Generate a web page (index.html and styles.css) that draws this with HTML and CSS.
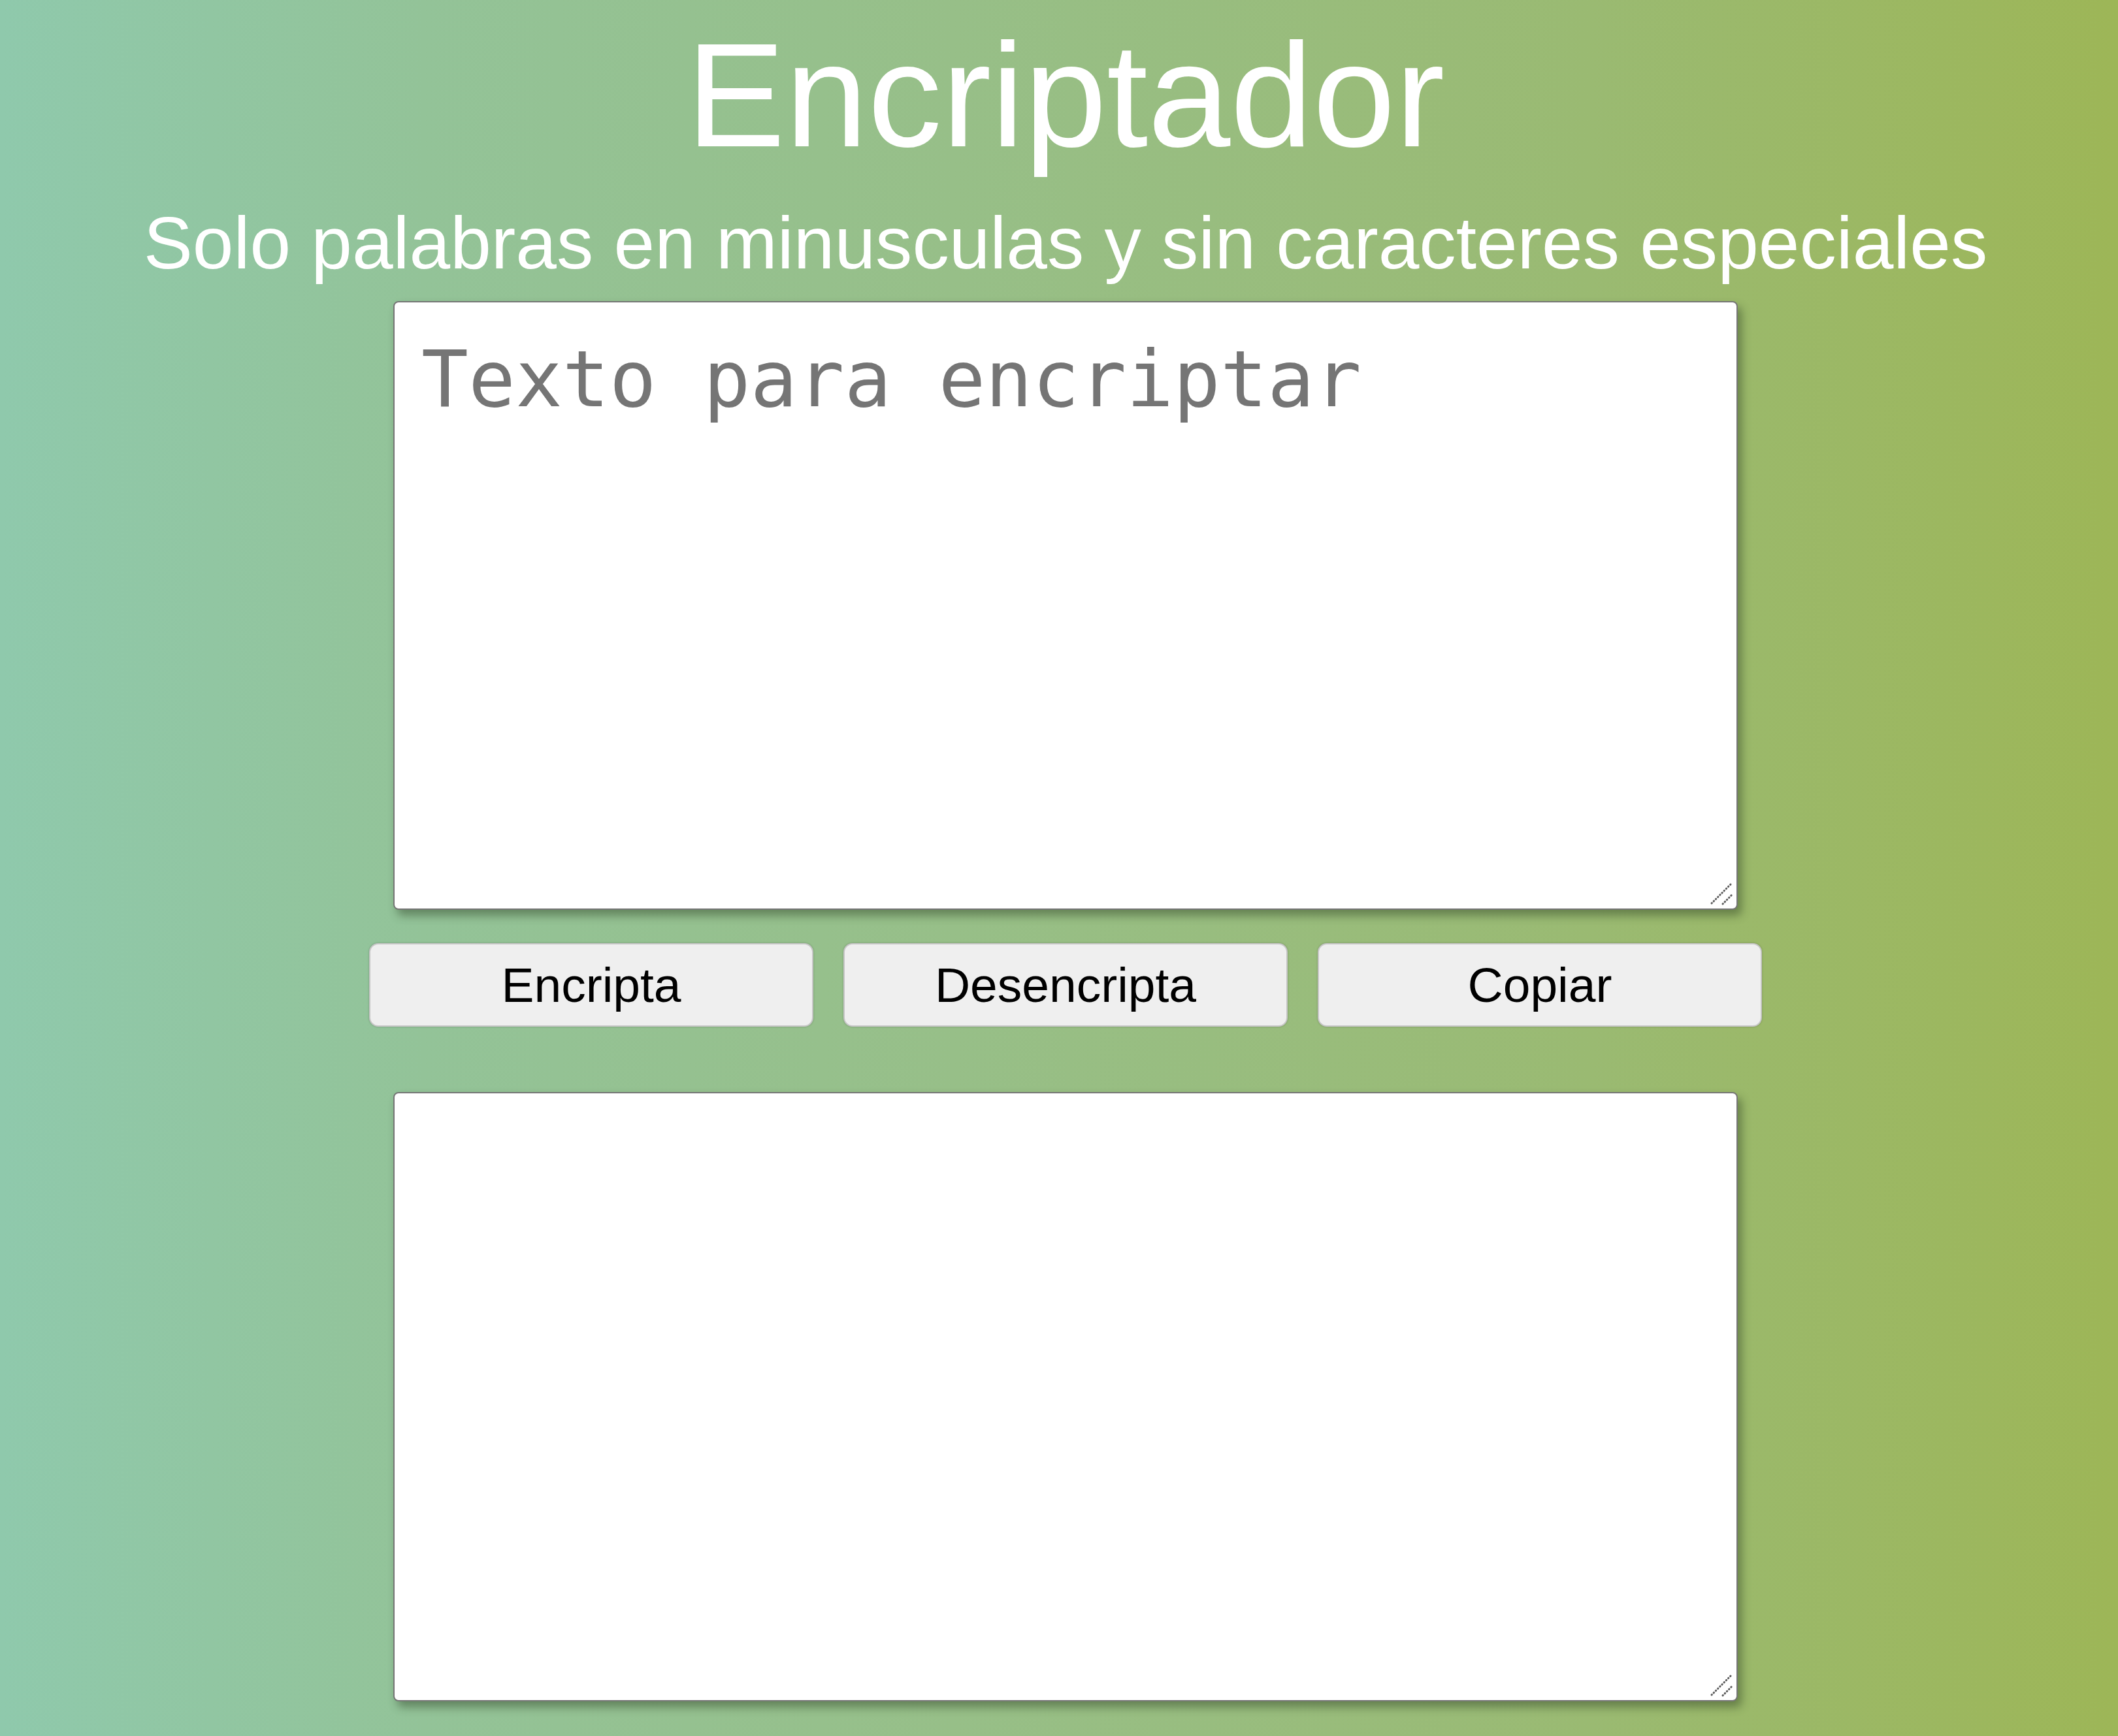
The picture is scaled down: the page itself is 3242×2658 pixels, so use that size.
FILE: index.html
```html
<!DOCTYPE html>
<html lang="es">
<head>
<meta charset="utf-8">
<title>Encriptador</title>
<link rel="stylesheet" href="styles.css">
</head>
<body>
<main class="page">
  <h1 class="title">Encriptador</h1>
  <h2 class="subtitle">Solo palabras en minusculas y sin caracteres especiales</h2>
  <div class="field">
    <textarea class="box" placeholder="Texto para encriptar"></textarea>
    <svg class="grip" viewBox="0 0 40 40" aria-hidden="true"><path d="M4 34 L35 3 M21 35 L35 21" /></svg>
  </div>
  <div class="actions">
    <button class="btn">Encripta</button>
    <button class="btn">Desencripta</button>
    <button class="btn">Copiar</button>
  </div>
  <div class="field field-out">
    <textarea class="box" readonly></textarea>
    <svg class="grip" viewBox="0 0 40 40" aria-hidden="true"><path d="M4 34 L35 3 M21 35 L35 21" /></svg>
  </div>
</main>
</body>
</html>
```

FILE: styles.css
```css
html, body {
  margin: 0;
  padding: 0;
}
body {
  min-height: 2658px;
  background: linear-gradient(to right, #8fc9ac 0%, #93c398 20%, #97bf88 45%, #9aba72 75%, #9db657 100%);
  font-family: "Liberation Sans", Arial, sans-serif;
}
.page {
  display: flex;
  flex-direction: column;
  align-items: center;
  padding-left: 20px;
}
.title {
  margin: 15px 0 0;
  font-size: 227px;
  line-height: 262px;
  font-weight: normal;
  color: #ffffff;
}
.subtitle {
  margin: 30px 0 0;
  font-size: 112.6px;
  line-height: 131px;
  font-weight: normal;
  color: #ffffff;
}
.field {
  position: relative;
  margin-top: 23px;
  width: 2058px;
  height: 932px;
}
.field-out {
  margin-top: 100px;
  height: 933px;
}
.box {
  box-sizing: border-box;
  display: block;
  width: 100%;
  height: 100%;
  margin: 0;
  padding: 48px 41px;
  border: 2px solid #767676;
  border-radius: 8px;
  background: #ffffff;
  box-shadow: 6px 9px 14px rgba(40, 60, 30, 0.45);
  font-family: "DejaVu Sans Mono", monospace;
  font-size: 119.5px;
  color: #000;
  resize: none;
  outline: none;
}
.box::placeholder {
  color: #757575;
}
.grip {
  position: absolute;
  right: 4px;
  bottom: 4px;
  width: 40px;
  height: 40px;
  fill: none;
  stroke: #5a5a5a;
  stroke-width: 3;
  stroke-linecap: round;
  stroke-dasharray: 0.5 4;
  pointer-events: none;
}
.actions {
  display: flex;
  gap: 46px;
  margin-top: 51px;
}
.btn {
  box-sizing: border-box;
  width: 680px;
  height: 128px;
  margin: 0;
  padding: 0;
  border: 2px solid #c6c6c6;
  border-radius: 14px;
  background: #efefef;
  box-shadow: 0 0 3px rgba(0, 0, 0, 0.25);
  font-family: "Liberation Sans", Arial, sans-serif;
  font-size: 75px;
  color: #000;
  cursor: pointer;
}
```
